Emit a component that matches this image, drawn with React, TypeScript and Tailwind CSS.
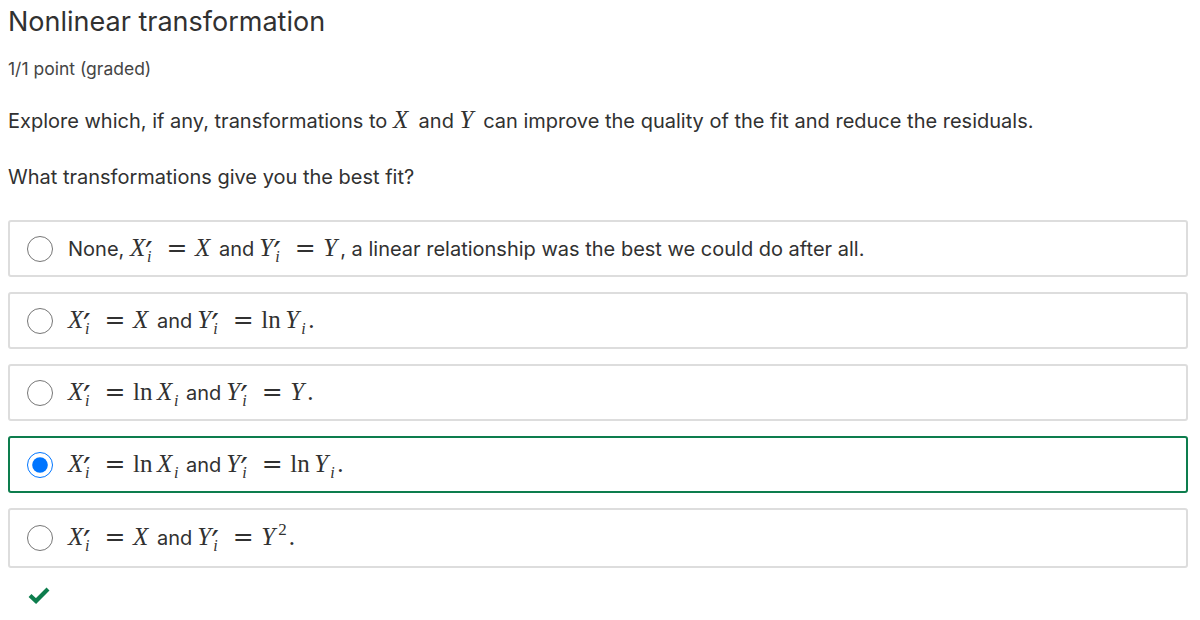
import React from "react";

const sans = { fontFamily: "Inter, 'Noto Sans', sans-serif" };
const serif = { fontFamily: "'Liberation Serif', 'DejaVu Serif', serif" };

// italic math letter, given a wider box to match the TeX glyph widths
const L = ({ c, w }: { c: string; w: string }) => (
  <span className={"italic inline-block " + w}>{c}</span>
);

// prime and subscript i stacked after a letter
const PrimeSub = () => (
  <span className="relative inline-block w-[11px] h-[10px]">
    <span
      className="absolute -left-[3px] -top-[9px] text-[34px] leading-none not-italic"
      style={{ fontFamily: "'DejaVu Sans', sans-serif" }}
    >
      ′
    </span>
    <span className="absolute -left-[1px] top-[3px] text-[16px] leading-none italic">i</span>
  </span>
);

const SubI = () => (
  <span className="relative inline-block w-[7px] h-[10px]">
    <span className="absolute left-0 top-[3px] text-[16px] leading-none italic">i</span>
  </span>
);

const Eq = () => (
  <span className="inline-block w-[36px] text-center" style={{ fontFamily: "'DejaVu Serif', serif" }}>
    =
  </span>
);

const Ln = () => <span className="inline-block w-[24px]">ln</span>;

const M = ({ children }: { children: React.ReactNode }) => (
  <span className="text-[25px] leading-none whitespace-nowrap" style={serif}>
    {children}
  </span>
);

const And = () => <span className="mx-[5px]">and</span>;

const Xp = () => (
  <>
    <L c="X" w="w-[18px]" />
    <PrimeSub />
  </>
);
const Yp = () => (
  <>
    <L c="Y" w="w-[17px]" />
    <PrimeSub />
  </>
);

const options: { key: string; checked?: boolean; tall?: boolean; content: React.ReactNode }[] = [
  {
    key: "a",
    content: (
      <>
        None,{" "}
        <M>
          <Xp />
          <Eq />
          <L c="X" w="w-[19px]" />
        </M>
        <And />
        <M>
          <Yp />
          <Eq />
          <L c="Y" w="w-[17px]" />
        </M>
        , a linear relationship was the best we could do after all.
      </>
    ),
  },
  {
    key: "b",
    content: (
      <>
        <M>
          <Xp />
          <Eq />
          <L c="X" w="w-[19px]" />
        </M>
        <And />
        <M>
          <Yp />
          <Eq />
          <Ln />
          <L c="Y" w="w-[16px]" />
          <SubI />.
        </M>
      </>
    ),
  },
  {
    key: "c",
    content: (
      <>
        <M>
          <Xp />
          <Eq />
          <Ln />
          <L c="X" w="w-[17px]" />
          <SubI />
        </M>
        <And />
        <M>
          <Yp />
          <Eq />
          <L c="Y" w="w-[17px]" />.
        </M>
      </>
    ),
  },
  {
    key: "d",
    checked: true,
    content: (
      <>
        <M>
          <Xp />
          <Eq />
          <Ln />
          <L c="X" w="w-[17px]" />
          <SubI />
        </M>
        <And />
        <M>
          <Yp />
          <Eq />
          <Ln />
          <L c="Y" w="w-[16px]" />
          <SubI />.
        </M>
      </>
    ),
  },
  {
    key: "e",
    tall: true,
    content: (
      <>
        <M>
          <Xp />
          <Eq />
          <L c="X" w="w-[19px]" />
        </M>
        <And />
        <M>
          <Yp />
          <Eq />
          <L c="Y" w="w-[17px]" />
          <span className="text-[17px] relative -top-[10px] mr-[2px]">2</span>.
        </M>
      </>
    ),
  },
];

const App = (): JSX.Element => {
  return (
    <div className="w-[1200px] h-[620px] bg-white pl-2 pr-3 pt-[6px] text-[#313131] overflow-hidden" style={sans}>
      <h1 className="text-[27px] leading-[32px] font-normal">Nonlinear transformation</h1>
      <p className="mt-[19px] text-[17.5px] leading-[24px] text-[#454545]">1/1 point (graded)</p>
      <p className="mt-[26px] text-[20px] leading-[28px]">
        Explore which, if any, transformations to{" "}
        <M>
          <L c="X" w="w-[20px]" />
        </M>{" "}
        and{" "}
        <M>
          <L c="Y" w="w-[18px]" />
        </M>{" "}
        can improve the quality of the fit and reduce the residuals.
      </p>
      <p className="mt-[28px] text-[20px] leading-[28px]">What transformations give you the best fit?</p>

      <div className="mt-[29px] flex flex-col gap-[15px]">
        {options.map((opt) => (
          <label
            key={opt.key}
            className={
              "flex items-center rounded-[3px] border-2 pl-[17px] text-[20px] " +
              (opt.tall ? "h-[60px] " : "h-[57px] ") +
              (opt.checked ? "border-[#0d7d4d]" : "border-[#dddddd]")
            }
          >
            <input
              type="radio"
              name="fit"
              readOnly
              defaultChecked={opt.checked}
              className="m-0 w-[26px] h-[26px] shrink-0"
            />
            <span className="ml-[15px] whitespace-nowrap leading-[28px]">{opt.content}</span>
          </label>
        ))}
      </div>

      <div className="mt-[18px] pl-[20px]">
        <svg width="22" height="18" viewBox="0 0 22 18">
          <path d="M2 9.5 L8 15 L20 3" fill="none" stroke="#0d7d4d" strokeWidth="4.2" strokeLinejoin="miter" />
        </svg>
      </div>
    </div>
  );
};

export default App;
